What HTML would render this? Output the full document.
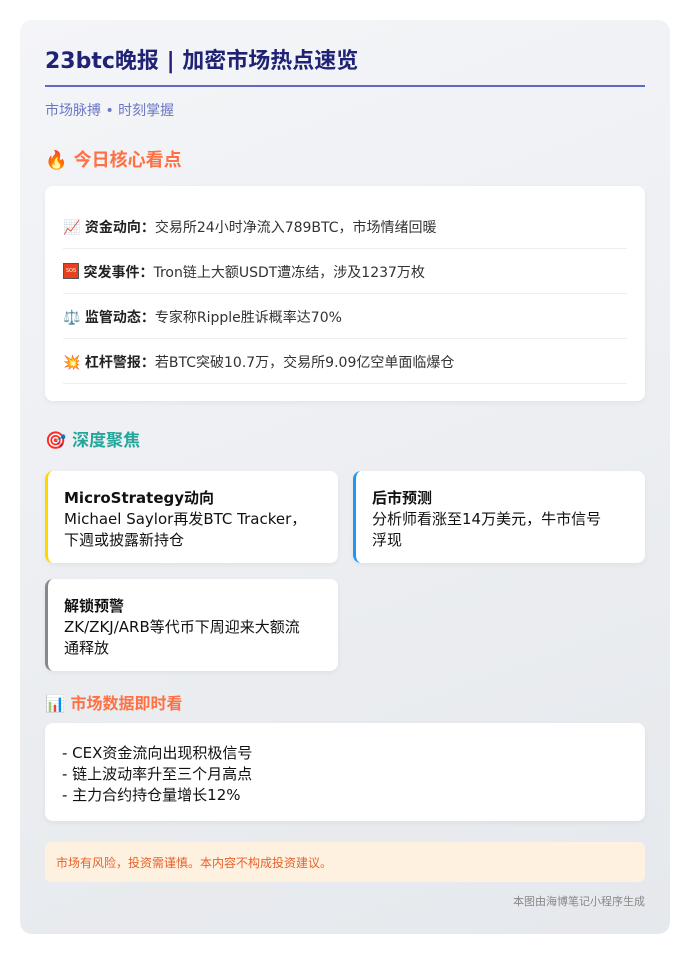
<!DOCTYPE html>
<html><head><meta charset="utf-8">
<style>
*{margin:0;padding:0;box-sizing:border-box}
body{width:690px;height:954px;background:#fff;font-family:"DejaVu Sans","Noto Sans CJK SC",sans-serif;position:relative;overflow:hidden}
.wrap{position:absolute;left:20px;top:20px;width:650px;height:914px;border-radius:12px;background:linear-gradient(160deg,#f4f5f8,#e5e8ec)}
.a{position:absolute;white-space:nowrap;line-height:1.2}
.card{position:absolute;background:#fff;border-radius:8px;box-shadow:0 2px 6px rgba(0,0,0,0.05)}
.item{position:absolute;left:18px;right:18px;height:45px;border-bottom:1px solid #eceef1;font-size:14px;color:#333;line-height:49px;white-space:nowrap}
.item b{color:#222}
.fc{position:absolute;background:#fff;border-radius:8px;box-shadow:0 2px 6px rgba(0,0,0,0.05);padding:17px 18px 0 16px;font-size:15px;line-height:21px;color:#111}
.fc b{display:block}
.sos{display:inline-block;width:16px;height:16px;background:#e8401c;color:#fff;font-size:5px;line-height:14px;text-align:center;vertical-align:middle;position:relative;top:-2px;border:1px solid #555}
</style></head><body>
<div class="wrap"></div>
<div class="a" style="left:45px;top:49px;font-size:22px;font-weight:bold;color:#1f2275">23btc晚报 | 加密市场热点速览</div>
<div class="a" style="left:45px;top:85px;width:600px;height:2px;background:#5c6bc0"></div>
<div class="a" style="left:45px;top:103px;font-size:14px;color:#6b78c4">市场脉搏 • 时刻掌握</div>
<div class="a" style="left:45px;top:150px;font-size:18px;font-weight:bold;color:#ff7043">🔥 今日核心看点</div>
<div class="card" style="left:45px;top:186px;width:600px;height:215px">
 <div class="item" style="top:18px">📈 <b>资金动向：</b>交易所24小时净流入789BTC，市场情绪回暖</div>
 <div class="item" style="top:63px"><span class="sos">SOS</span> <b>突发事件：</b>Tron链上大额USDT遭冻结，涉及1237万枚</div>
 <div class="item" style="top:108px">⚖️ <b>监管动态：</b>专家称Ripple胜诉概率达70%</div>
 <div class="item" style="top:153px">💥 <b>杠杆警报：</b>若BTC突破10.7万，交易所9.09亿空单面临爆仓</div>
</div>
<div class="a" style="left:45px;top:431px;font-size:17px;font-weight:bold;color:#26a69a">🎯 深度聚焦</div>
<div class="fc" style="left:45px;top:471px;width:293px;height:92px;border-left:3px solid #ffd600"><b>MicroStrategy动向</b>Michael Saylor再发BTC Tracker，下週或披露新持仓</div>
<div class="fc" style="left:353px;top:471px;width:292px;height:92px;border-left:3px solid #2196f3;padding-right:40px"><b>后市预测</b>分析师看涨至14万美元，牛市信号浮现</div>
<div class="fc" style="left:45px;top:579px;width:293px;height:92px;border-left:3px solid #888;padding-right:24px"><b>解锁预警</b>ZK/ZKJ/ARB等代币下周迎来大额流通释放</div>
<div class="a" style="left:45px;top:694px;font-size:16px;font-weight:bold;color:#ff7043">📊 市场数据即时看</div>
<div class="card" style="left:45px;top:723px;width:600px;height:98px;padding:20px 0 0 17px;font-size:15px;line-height:21px;color:#111">- CEX资金流向出现积极信号<br>- 链上波动率升至三个月高点<br>- 主力合约持仓量增长12%</div>
<div class="a" style="left:45px;top:842px;width:600px;height:40px;background:#fff1df;border-radius:6px;font-size:12px;color:#e8612c;line-height:42px;padding-left:11px">市场有风险，投资需谨慎。本内容不构成投资建议。</div>
<div class="a" style="right:45px;top:895px;font-size:11px;color:#888">本图由海博笔记小程序生成</div>
</body></html>
